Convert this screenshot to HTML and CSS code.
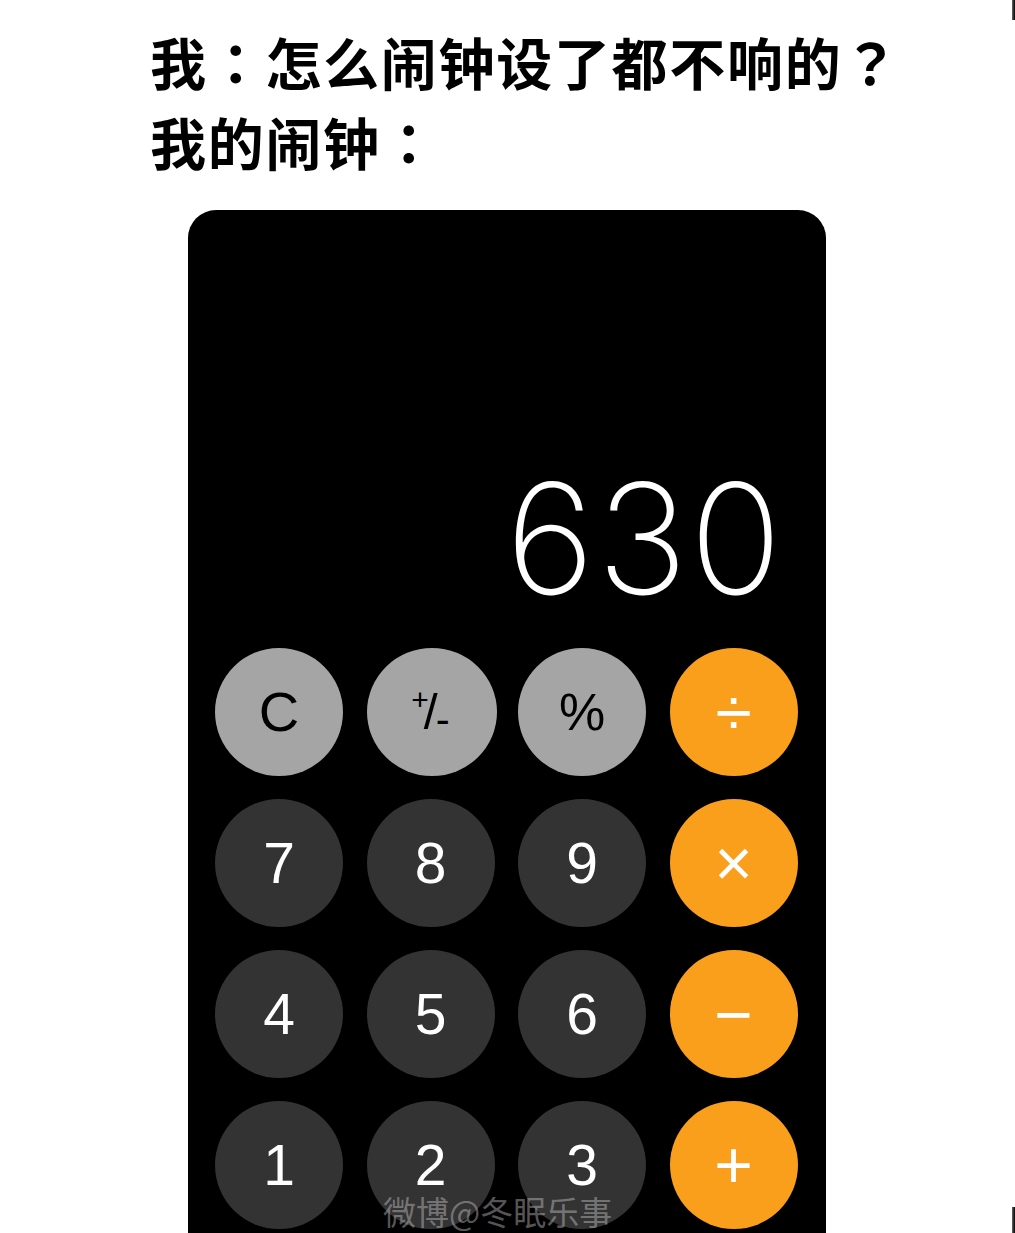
FILE: index.html
```html
<!DOCTYPE html>
<html lang="zh">
<head>
<meta charset="utf-8">
<title>我的闹钟</title>
<link rel="stylesheet" href="styles.css">
</head>
<body>
<div class="page">
  <div class="caption">
    <div class="line">我<span class="punct" lang="zh-Hant">：</span>怎么闹钟设了都不响的<span class="punct" lang="zh-Hant">？</span></div>
    <div class="line">我的闹钟<span class="punct" lang="zh-Hant">：</span></div>
  </div>
  <div class="calc">
    <div class="display">630</div>
    <div class="keys">
      <div class="key light">C</div>
      <div class="key light pm"><span class="sup">+</span><span class="sl">/</span><span class="sub">-</span></div>
      <div class="key light pct">%</div>
      <div class="key op">÷</div>
      <div class="key dark">7</div>
      <div class="key dark">8</div>
      <div class="key dark">9</div>
      <div class="key op">×</div>
      <div class="key dark">4</div>
      <div class="key dark">5</div>
      <div class="key dark">6</div>
      <div class="key op">−</div>
      <div class="key dark">1</div>
      <div class="key dark">2</div>
      <div class="key dark">3</div>
      <div class="key op">+</div>
    </div>
    <div class="watermark">微博@冬眠乐事</div>
  </div>
  <div class="edge edge-top"></div>
  <div class="edge edge-bottom"></div>
</div>
</body>
</html>
```

FILE: styles.css
```css
html, body {
  margin: 0;
  padding: 0;
  background: #ffffff;
}
.page {
  position: relative;
  width: 1015px;
  height: 1233px;
  overflow: hidden;
}
.caption {
  padding: 21px 0 0 150px;
  font-family: "Noto Sans CJK SC", "Noto Sans", sans-serif;
  font-weight: 700;
  font-size: 56px;
  line-height: 80px;
  color: #000;
  letter-spacing: 1.7px;
}
.caption .punct {
  font-family: "Noto Sans CJK TC", "Noto Sans CJK JP", "Noto Sans CJK SC", sans-serif;
}
.calc {
  position: relative;
  margin: 29px 0 0 188px;
  width: 638px;
  height: 1100px;
  background: #000;
  border-radius: 28px;
}
.display {
  padding: 254px 42px 0 0;
  text-align: right;
  font-family: "Inter", "Liberation Sans", sans-serif;
  font-weight: 200;
  font-size: 153px;
  line-height: 150px;
  color: #fff;
  letter-spacing: 2px;
}
.keys {
  margin-top: 34px;
  padding-left: 27px;
  display: grid;
  grid-template-columns: repeat(4, 128px);
  column-gap: 23.5px;
  row-gap: 23px;
}
.key {
  width: 128px;
  height: 128px;
  border-radius: 50%;
  display: flex;
  align-items: center;
  justify-content: center;
  font-family: "Liberation Sans", "Helvetica", sans-serif;
  font-size: 57px;
  line-height: 1;
}
.light {
  background: #a5a5a5;
  color: #000;
  font-size: 56px;
}
.dark {
  background: #333333;
  color: #fff;
}
.op {
  background: #fa9f1b;
  color: #fff;
  font-size: 66px;
}
.pm {
  font-size: 50px;
  padding-right: 2px;
}
.pm .sup {
  font-size: 30px;
  position: relative;
  top: -12px;
  margin-right: -5px;
}
.pm .sl {
  font-size: 50px;
}
.pm .sub {
  font-size: 42px;
  position: relative;
  top: 8px;
  margin-left: -2px;
}
.pct {
  font-size: 52px;
}
.watermark {
  position: absolute;
  left: 195px;
  top: 981px;
  font-family: "Noto Sans CJK SC", sans-serif;
  font-size: 33px;
  line-height: 40px;
  color: rgba(210, 210, 210, 0.42);
}
.edge {
  position: absolute;
  right: 0;
  width: 3px;
  background: linear-gradient(to right, #666, #000);
}
.edge-top {
  top: 0;
  height: 20px;
}
.edge-bottom {
  bottom: 0;
  height: 26px;
}
```
